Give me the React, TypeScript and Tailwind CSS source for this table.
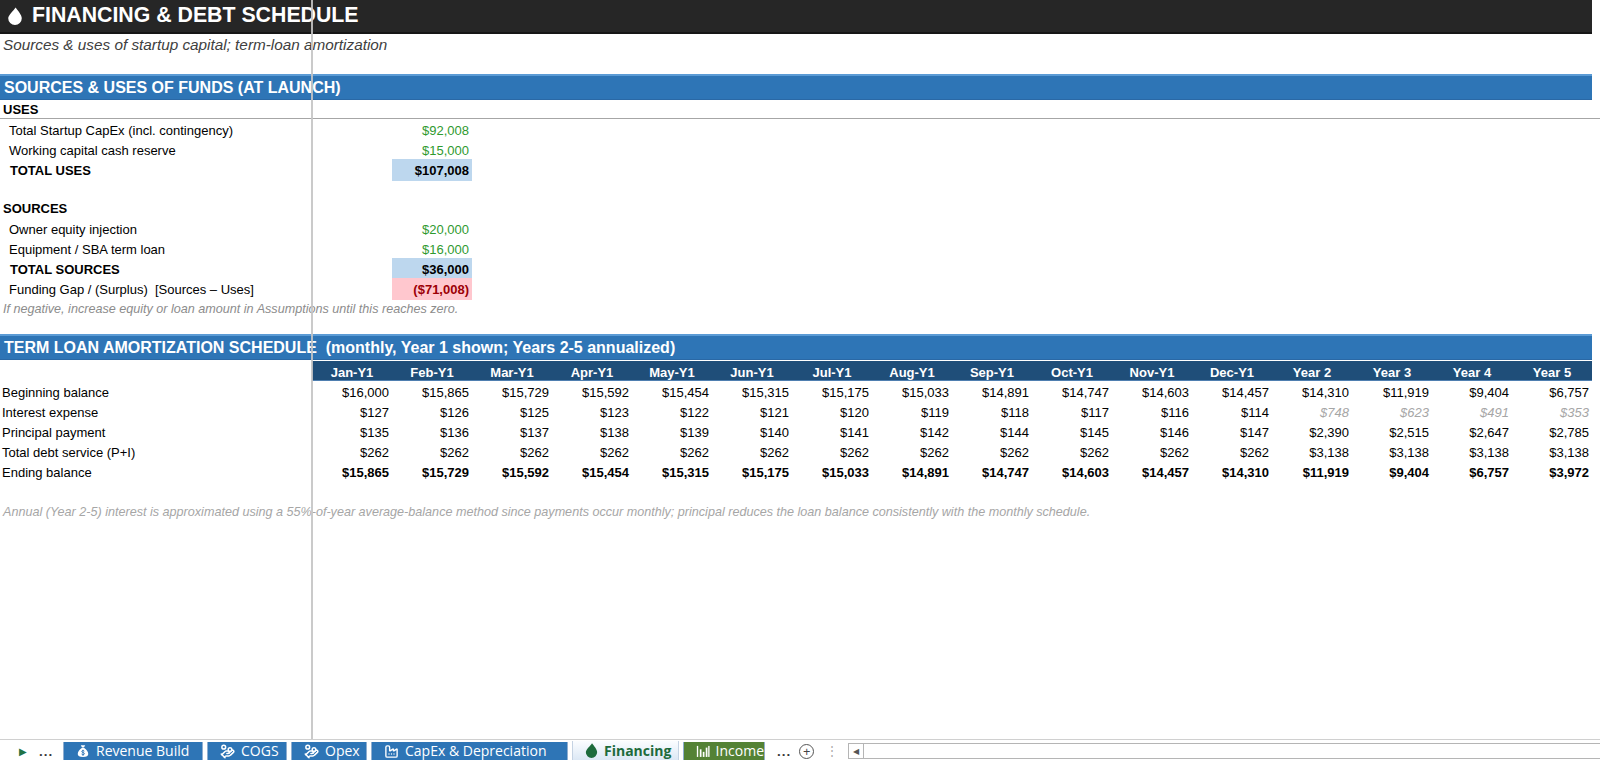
import { Factory, HandCoins } from 'lucide-react';

const months = [
  'Jan-Y1', 'Feb-Y1', 'Mar-Y1', 'Apr-Y1', 'May-Y1', 'Jun-Y1',
  'Jul-Y1', 'Aug-Y1', 'Sep-Y1', 'Oct-Y1', 'Nov-Y1', 'Dec-Y1',
  'Year 2', 'Year 3', 'Year 4', 'Year 5',
];

const schedule = [
  {
    label: 'Beginning balance',
    values: ['$16,000', '$15,865', '$15,729', '$15,592', '$15,454', '$15,315', '$15,175', '$15,033', '$14,891', '$14,747', '$14,603', '$14,457', '$14,310', '$11,919', '$9,404', '$6,757'],
  },
  {
    label: 'Interest expense',
    values: ['$127', '$126', '$125', '$123', '$122', '$121', '$120', '$119', '$118', '$117', '$116', '$114', '$748', '$623', '$491', '$353'],
    annualItalic: true,
  },
  {
    label: 'Principal payment',
    values: ['$135', '$136', '$137', '$138', '$139', '$140', '$141', '$142', '$144', '$145', '$146', '$147', '$2,390', '$2,515', '$2,647', '$2,785'],
  },
  {
    label: 'Total debt service (P+I)',
    values: ['$262', '$262', '$262', '$262', '$262', '$262', '$262', '$262', '$262', '$262', '$262', '$262', '$3,138', '$3,138', '$3,138', '$3,138'],
  },
  {
    label: 'Ending balance',
    values: ['$15,865', '$15,729', '$15,592', '$15,454', '$15,315', '$15,175', '$15,033', '$14,891', '$14,747', '$14,603', '$14,457', '$14,310', '$11,919', '$9,404', '$6,757', '$3,972'],
    bold: true,
  },
];

function Drop({ className }: { className?: string }) {
  return (
    <svg viewBox="0 0 14 17" className={className} fill="currentColor">
      <path d="M7.6 0.4C6 3 0.6 7.6 0.6 10.6a6.4 6.4 0 0 0 12.8 0C13.4 7.2 9.6 3.4 7.6 0.4Z" />
    </svg>
  );
}

function MoneyBag({ className }: { className?: string }) {
  return (
    <svg viewBox="0 0 16 16" className={className}>
      <path d="M5.5 1.5h5l-1.4 2.6h-2.2Z" fill="white" />
      <path d="M6.6 4.6h2.8c2.6 1.6 4.6 4.4 4.6 6.8 0 2.4-2 3.4-6 3.4s-6-1-6-3.4c0-2.4 2-5.2 4.6-6.8Z" fill="white" />
      <path d="M9.6 8.2c-.4-.5-1-.7-1.6-.7-.9 0-1.5.4-1.5 1.1 0 1.5 3.2.8 3.2 2.4 0 .7-.7 1.2-1.7 1.2-.7 0-1.3-.3-1.7-.8M8 6.6v7" stroke="#2E75B6" strokeWidth="1" fill="none" />
    </svg>
  );
}

function BarsIcon({ className }: { className?: string }) {
  return (
    <svg viewBox="0 0 16 16" className={className} fill="white">
      <rect x="1" y="2" width="1.6" height="13" />
      <rect x="4.5" y="6" width="2" height="9" />
      <rect x="8" y="9" width="2" height="6" />
      <rect x="11.5" y="4" width="2" height="11" />
      <rect x="14.4" y="2" width="1.6" height="13" />
    </svg>
  );
}

function Band({ children }: { children: React.ReactNode }) {
  return (
    <div className="flex h-[26px] w-[1592px] shrink-0 items-center border-t-2 border-b border-t-[#5b9bd5] border-b-[#2a68a5] bg-[#2E75B6] pt-px pl-[4px] text-[16px] font-bold whitespace-pre text-white">
      {children}
    </div>
  );
}

function FundRow({
  label,
  value,
  indent = 'pl-[9px]',
  labelClass = '',
  cellClass = 'text-[#2f9a2f]',
}: {
  label: string;
  value: string;
  indent?: string;
  labelClass?: string;
  cellClass?: string;
}) {
  return (
    <div className="grid h-[20px] shrink-0 grid-cols-[312px_80px_80px]">
      <div className={`flex items-center pt-[2px] whitespace-pre ${indent} ${labelClass}`}>{label}</div>
      <div />
      <div className={`flex items-center justify-end pt-[2px] pr-[3px] ${cellClass}`}>{value}</div>
    </div>
  );
}

function Tab({
  width,
  icon,
  label,
  className,
}: {
  width: string;
  icon: React.ReactNode;
  label: string;
  className: string;
}) {
  return (
    <div className={`flex h-[18px] shrink-0 items-center gap-[6px] overflow-hidden border-x border-[#8faed0] pl-[12px] text-[14px] leading-none ${width} ${className}`}>
      {icon}
      <span className="whitespace-nowrap">{label}</span>
    </div>
  );
}

export default function App() {
  return (
    <div className="relative h-[760px] w-[1600px] overflow-hidden bg-white font-['Liberation_Sans',Arial,sans-serif] text-[13px] text-black">
      <div className="flex h-[760px] flex-col">
        {/* Title */}
        <div className="flex h-[34px] w-[1592px] shrink-0 items-center gap-[9px] border-b-2 border-[#161616] bg-[#262626] pl-[7px]">
          <Drop className="h-[18px] w-[16px] shrink-0 text-white" />
          <span className="text-[21.3px] font-bold text-white">FINANCING &amp; DEBT SCHEDULE</span>
        </div>
        <div className="flex h-[21px] shrink-0 items-center pt-px pl-[3px] text-[15.3px] text-[#404040] italic">
          Sources &amp; uses of startup capital; term-loan amortization
        </div>
        <div className="h-[19px] shrink-0" />

        {/* Sources & uses */}
        <Band>SOURCES &amp; USES OF FUNDS (AT LAUNCH)</Band>
        <div className="flex h-[19px] shrink-0 items-center border-b border-[#a6a6a6] pt-[2px] pl-[3px] font-bold">USES</div>
        <FundRow label="Total Startup CapEx (incl. contingency)" value="$92,008" />
        <FundRow label="Working capital cash reserve" value="$15,000" />
        <FundRow
          label="TOTAL USES"
          value="$107,008"
          indent="pl-[10px]"
          labelClass="font-bold"
          cellClass="bg-[#BDD7EE] font-bold"
        />
        <div className="h-[19px] shrink-0" />
        <div className="flex h-[20px] shrink-0 items-center pt-[2px] pl-[3px] font-bold">SOURCES</div>
        <FundRow label="Owner equity injection" value="$20,000" />
        <FundRow label="Equipment / SBA term loan" value="$16,000" />
        <FundRow
          label="TOTAL SOURCES"
          value="$36,000"
          indent="pl-[10px]"
          labelClass="font-bold"
          cellClass="bg-[#BDD7EE] font-bold"
        />
        <FundRow
          label="Funding Gap / (Surplus)  [Sources – Uses]"
          value="($71,008)"
          cellClass="bg-[#FFC7CE] font-bold text-[#9C0006]"
        />
        <div className="flex h-[20px] shrink-0 items-center pt-[2px] pl-[3px] text-[12.6px] text-[#8c8c8c] italic">
          If negative, increase equity or loan amount in Assumptions until this reaches zero.
        </div>
        <div className="h-[16px] shrink-0" />

        {/* Amortization */}
        <Band>TERM LOAN AMORTIZATION SCHEDULE  (monthly, Year 1 shown; Years 2-5 annualized)</Band>
        <div className="flex h-[21px] shrink-0 pt-px">
          <div className="w-[312px]" />
          <div className="grid w-[1280px] grid-cols-16 border-b border-[#4f7fb0] bg-[#1F4E79] pt-[2px] font-bold text-white">
            {months.map((m) => (
              <div key={m} className="flex items-center justify-center">
                {m}
              </div>
            ))}
          </div>
        </div>
        {schedule.map((row) => (
          <div key={row.label} className="grid h-[20px] shrink-0 grid-cols-[312px_repeat(16,80px)] pt-[2px]">
            <div className="flex items-center pl-[2px]">{row.label}</div>
            {row.values.map((v, i) => (
              <div
                key={i}
                className={`flex items-center justify-end pr-[3px] ${row.bold ? 'font-bold' : ''} ${
                  row.annualItalic && i >= 12 ? 'text-[#a6a6a6] italic' : ''
                }`}
              >
                {v}
              </div>
            ))}
          </div>
        ))}
        <div className="h-[20px] shrink-0" />
        <div className="flex h-[20px] shrink-0 items-center pt-[2px] pl-[3px] text-[12.6px] text-[#a6a6a6] italic">
          Annual (Year 2-5) interest is approximated using a 55%-of-year average-balance method since payments occur monthly; principal reduces the loan balance consistently with the monthly schedule.
        </div>

        <div className="flex-1" />

        {/* Sheet tabs */}
        <div className="flex h-[21px] shrink-0 items-end border-t border-[#d0d0d0] bg-white font-['Open_Sans','Noto_Sans',sans-serif]">
          <div className="flex h-[18px] w-[63px] shrink-0 items-center">
            <span className="ml-[19px] text-[10px] leading-none text-[#217346]">▶</span>
            <span className="ml-[12px] text-[13px] leading-none font-bold tracking-[1px] text-[#333]">...</span>
          </div>
          <div className="flex items-end gap-[4px]">
            <Tab width="w-[140px]" label="Revenue Build" className="bg-[#2E75B6] text-white" icon={<MoneyBag className="h-[14px] w-[14px]" />} />
            <Tab width="w-[80px]" label="COGS" className="bg-[#2E75B6] text-white" icon={<HandCoins className="h-[15px] w-[15px]" strokeWidth={2.4} />} />
            <Tab width="w-[76px]" label="Opex" className="bg-[#2E75B6] text-white" icon={<HandCoins className="h-[15px] w-[15px]" strokeWidth={2.4} />} />
            <Tab width="w-[197px]" label="CapEx & Depreciation" className="bg-[#2E75B6] text-white" icon={<Factory className="h-[15px] w-[15px]" strokeWidth={2.2} />} />
            <Tab
              width="w-[107px]"
              label="Financing"
              className="h-[19px] border-[#c5d3e3] bg-gradient-to-b from-[#fbfdff] to-[#dce8f5] font-bold text-[#1d6b3c]"
              icon={<Drop className="h-[15px] w-[13px] shrink-0 text-[#1d6b3c]" />}
            />
            <Tab width="w-[82px]" label="Income" className="border-[#3d6b27] bg-[#548235] pl-[10px] text-white" icon={<BarsIcon className="h-[14px] w-[14px]" />} />
          </div>
          <div className="flex h-[18px] shrink-0 items-center">
            <span className="ml-[12px] text-[13px] leading-none font-bold tracking-[1px] text-[#333]">...</span>
            <span className="ml-[8px] flex h-[15px] w-[15px] items-center justify-center rounded-full border border-[#555] text-[13px] leading-none text-[#444]">
              +
            </span>
            <span className="ml-[12px] text-[12px] leading-none text-[#aaa]">⋮</span>
          </div>
          <div className="mb-px ml-[10px] flex h-[16px] flex-1 items-center border-y border-[#b5b5b5]">
            <div className="flex h-full w-[16px] items-center justify-center border-x border-[#b5b5b5] text-[8px] text-[#555]">◀</div>
          </div>
        </div>
      </div>

      {/* freeze-pane divider */}
      <div className="absolute top-0 left-[311px] h-[739px] w-[2px] bg-[#c4c4c4]/90" />
    </div>
  );
}
